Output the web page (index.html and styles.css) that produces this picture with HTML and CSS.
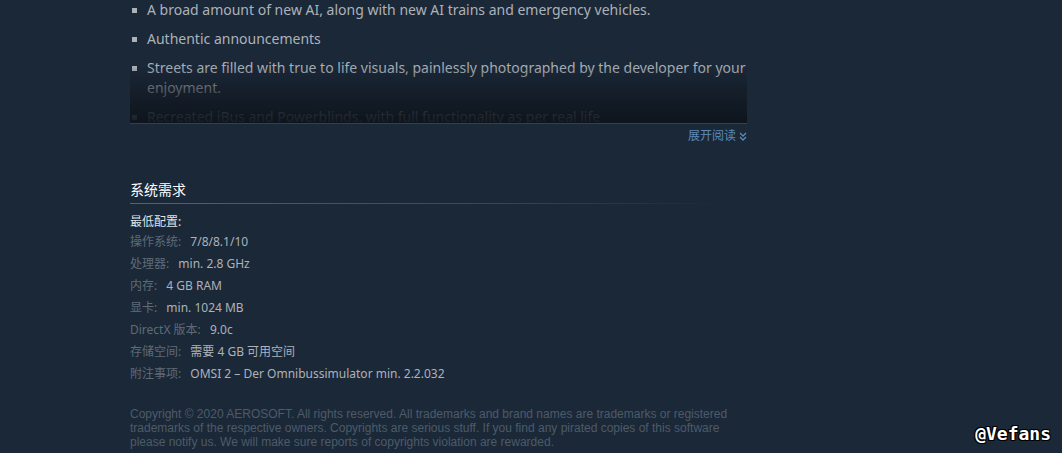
FILE: index.html
```html
<!DOCTYPE html>
<html lang="zh-CN">
<head>
    <meta charset="UTF-8">
    <meta name="viewport" content="width=device-width, initial-scale=1.0">
    <title>OMSI 2 Add-on</title>
    <link rel="stylesheet" href="styles.css">
</head>
<body>
    <div class="page">
        <div class="desc">
            <ul class="bb-list">
                <li>A broad amount of new AI, along with new AI trains and emergency vehicles.</li>
                <li>Authentic announcements</li>
                <li>Streets are filled with true to life visuals, painlessly photographed by the developer for your enjoyment.</li>
                <li>Recreated iBus and Powerblinds, with full functionality as per real life</li>
                <li>New depot and bus garage</li>
            </ul>
            <div class="fade"></div>
        </div>
        <div class="readmore">展开阅读 <svg class="chev" width="8" height="9" viewBox="0 0 8 9"><path d="M1 1 L4 4 L7 1 M1 5 L4 8 L7 5" fill="none" stroke="#5d8ab8" stroke-width="1.3"/></svg></div>

        <div class="sysreq">
            <h2>系统需求</h2>
            <div class="req-title">最低配置:</div>
            <ul class="req-list">
                <li><span class="label">操作系统:</span> 7/8/8.1/10</li>
                <li><span class="label">处理器:</span> min. 2.8 GHz</li>
                <li><span class="label">内存:</span> 4 GB RAM</li>
                <li><span class="label">显卡:</span> min. 1024 MB</li>
                <li><span class="label">DirectX 版本:</span> 9.0c</li>
                <li><span class="label">存储空间:</span> 需要 4 GB 可用空间</li>
                <li><span class="label">附注事项:</span> OMSI 2 – Der Omnibussimulator min. 2.2.032</li>
            </ul>
        </div>

        <div class="legal">
            Copyright © 2020 AEROSOFT. All rights reserved. All trademarks and brand names are trademarks or registered trademarks of the respective owners. Copyrights are serious stuff. If you find any pirated copies of this software please notify us. We will make sure reports of copyrights violation are rewarded.
        </div>
    </div>
    <div class="watermark">@Vefans</div>
</body>
</html>
```

FILE: styles.css
```css
body {
    margin: 0;
    background-color: #1b2838;
    font-family: "Noto Sans", Arial, "Noto Sans CJK SC", sans-serif;
    color: #acb2b8;
    height: 453px;
    overflow: hidden;
    position: relative;
}
.page {
    width: 617px;
    margin-left: 130px;
}
.desc {
    position: relative;
    height: 123px;
    overflow: hidden;
    border-bottom: 1px solid #2f4156;
}
.bb-list {
    margin: 0;
    padding: 0 0 0 17px;
    list-style: none;
    font-size: 14px;
    line-height: 20px;
}
.bb-list li {
    position: relative;
    margin-bottom: 9px;
}
.bb-list li::before {
    content: "";
    position: absolute;
    left: -15px;
    top: 8px;
    width: 5px;
    height: 5px;
    background-color: #acb2b8;
}
.fade {
    position: absolute;
    left: 0;
    right: 0;
    bottom: 0;
    height: 58px;
    background: linear-gradient(to bottom, rgba(16, 23, 32, 0) 0%, rgba(16, 23, 32, 0.75) 60%, rgba(13, 19, 27, 0.93) 100%);
}
.readmore {
    text-align: right;
    font-size: 12px;
    line-height: 20px;
    color: #5d8ab8;
    margin-top: 2px;
}
.chev {
    vertical-align: -1px;
}
.sysreq {
    margin-top: 34px;
}
.sysreq h2 {
    margin: 0 0 9px;
    font-size: 14px;
    font-weight: normal;
    color: #fff;
    line-height: 20px;
    padding-bottom: 3px;
    width: 590px;
    border-bottom: 1px solid transparent;
    border-image: linear-gradient(to right, #3b6b8a 0%, #2d4c64 60%, rgba(27, 40, 56, 0) 100%) 1;
}
.req-title {
    font-size: 12px;
    line-height: 18px;
    color: #dfe3e6;
}
.req-list {
    margin: 0;
    padding: 0;
    list-style: none;
    font-size: 12px;
    line-height: 22px;
    color: #acb2b8;
}
.req-list .label {
    color: #5f6b77;
    margin-right: 6px;
}
.legal {
    margin-top: 22px;
    font-family: Arial, "Liberation Sans", sans-serif;
    font-size: 12px;
    line-height: 14px;
    color: #4d5b68;
    width: 610px;
}
.watermark {
    position: absolute;
    right: 11px;
    bottom: 9px;
    font-family: "DejaVu Sans Mono", monospace;
    font-weight: bold;
    font-size: 18px;
    color: #fff;
    text-shadow: 1px 1px 0 #000, -1px -1px 0 #000, 1px -1px 0 #000, -1px 1px 0 #000;
}
```
